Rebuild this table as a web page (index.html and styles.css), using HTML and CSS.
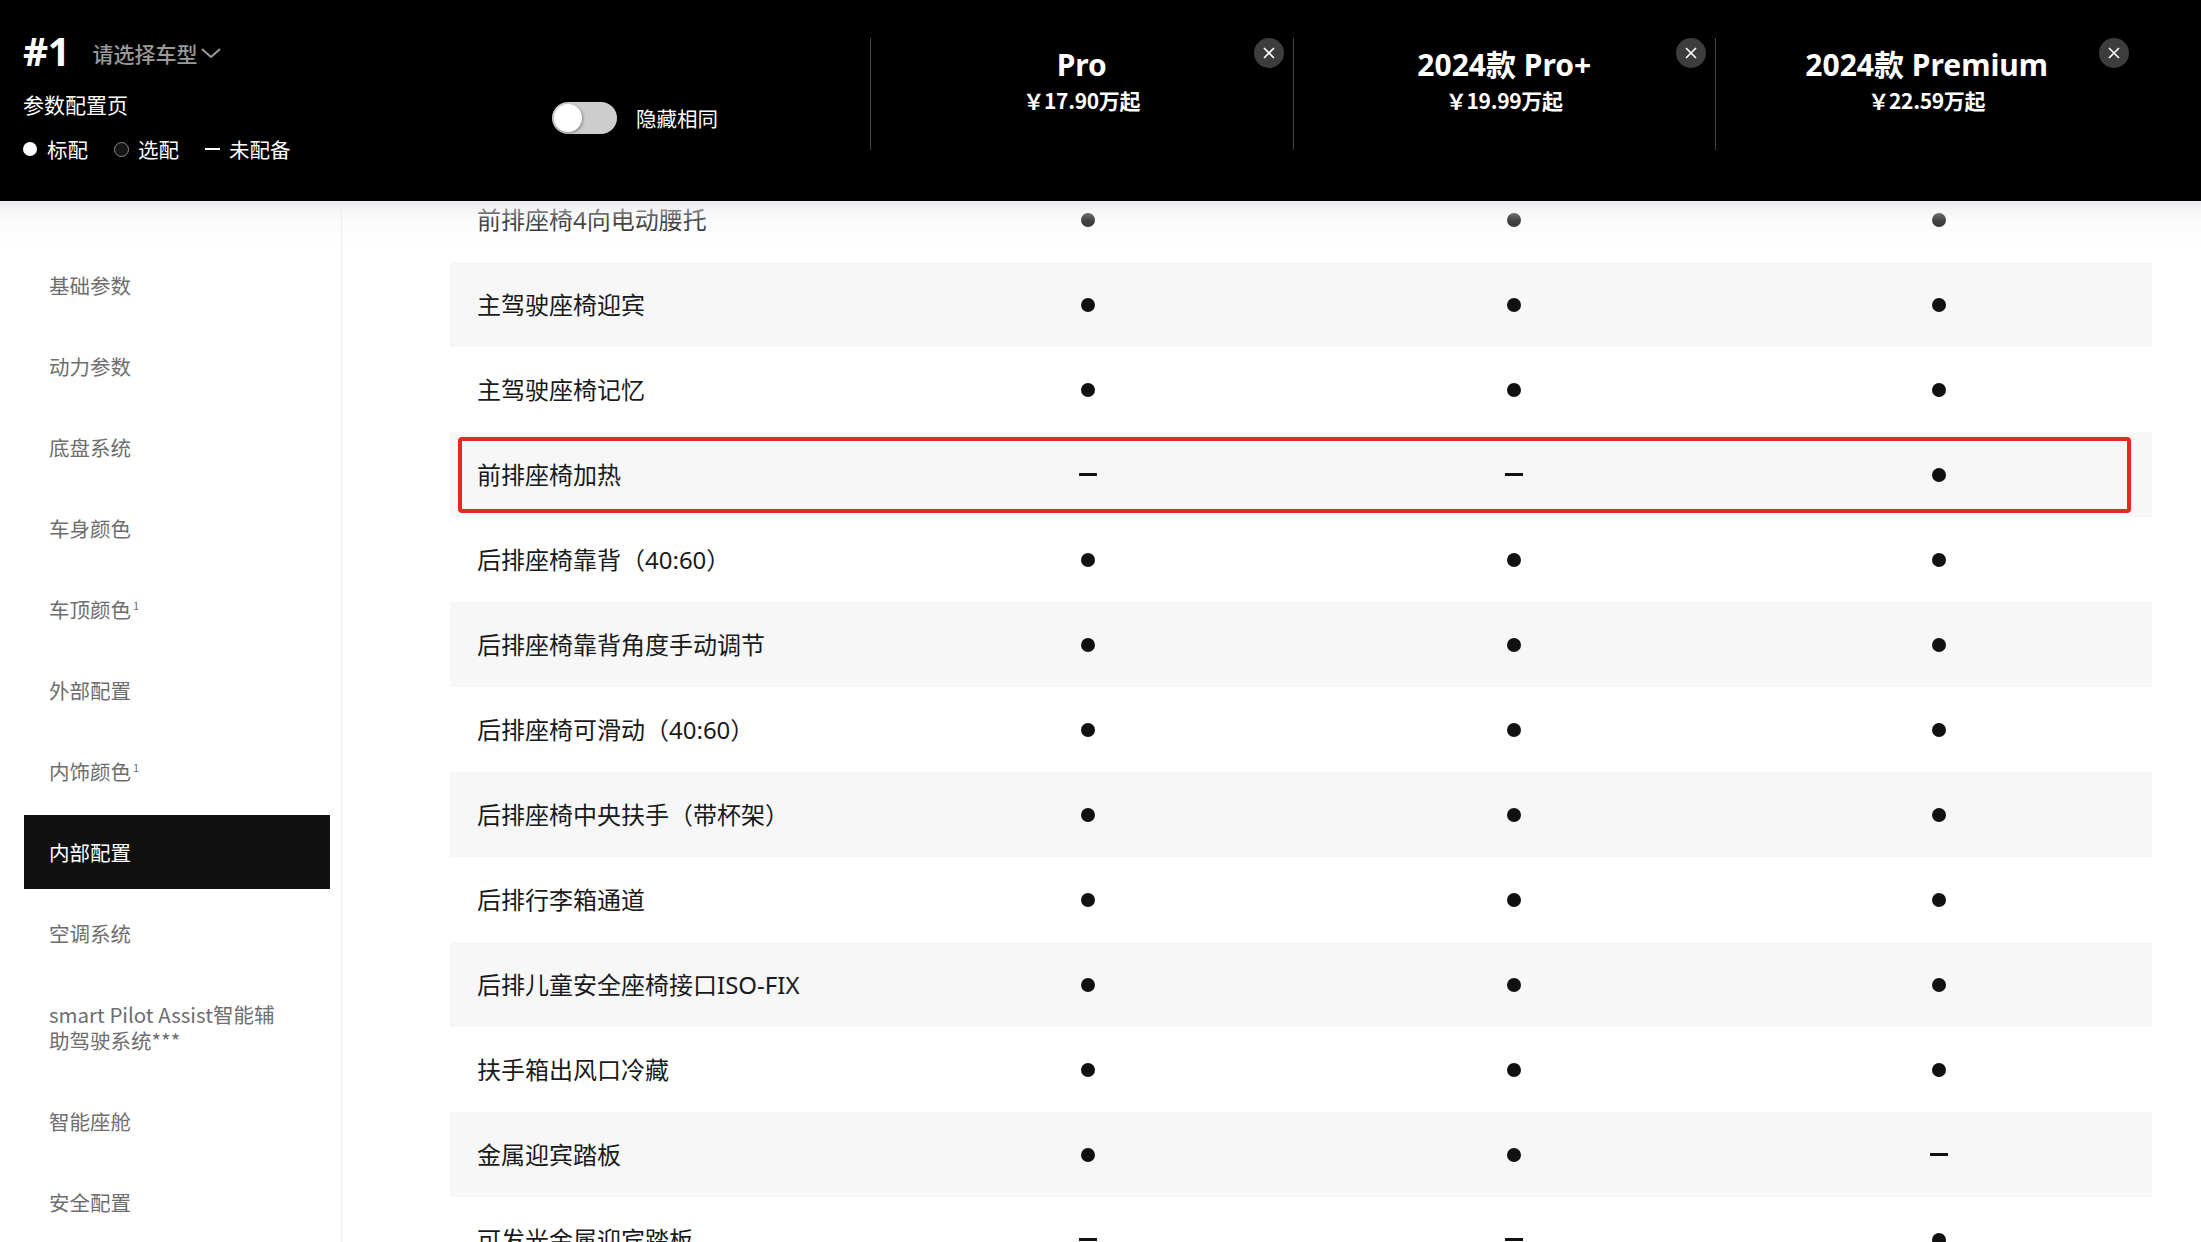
FILE: index.html
```html
<!DOCTYPE html>
<html lang="zh-CN">
<head>
<meta charset="utf-8">
<title>参数配置页</title>
<link rel="stylesheet" href="styles.css">
</head>
<body>
<div class="page">
  <header class="top">
    <div class="brand">
      <div class="brand-row">
        <span class="num">#1</span>
        <span class="select">请选择车型<svg class="chev" viewBox="0 0 20 10" width="20" height="10"><polyline points="1,1 10,9 19,1" fill="none" stroke="#9a9a9a" stroke-width="2"/></svg></span>
      </div>
      <div class="page-title">参数配置页</div>
      <div class="legend">
        <span class="lg-dot"></span><span class="lg-text">标配</span>
        <span class="lg-ring"></span><span class="lg-text">选配</span>
        <span class="lg-dash"></span><span class="lg-text">未配备</span>
      </div>
    </div>
    <div class="hide-same">
      <span class="switch"><span class="knob"></span></span>
      <span class="hide-label">隐藏相同</span>
    </div>
    <div class="models">
      <div class="model">
        <div class="model-name">Pro</div>
        <div class="model-price">￥17.90万起</div>
        <span class="close"><svg viewBox="0 0 12 12" width="12" height="12"><path d="M1 1 L11 11 M11 1 L1 11" stroke="#fff" stroke-width="1.6" fill="none"/></svg></span>
      </div>
      <div class="model">
        <div class="model-name">2024款 Pro+</div>
        <div class="model-price">￥19.99万起</div>
        <span class="close"><svg viewBox="0 0 12 12" width="12" height="12"><path d="M1 1 L11 11 M11 1 L1 11" stroke="#fff" stroke-width="1.6" fill="none"/></svg></span>
      </div>
      <div class="model">
        <div class="model-name">2024款 Premium</div>
        <div class="model-price">￥22.59万起</div>
        <span class="close"><svg viewBox="0 0 12 12" width="12" height="12"><path d="M1 1 L11 11 M11 1 L1 11" stroke="#fff" stroke-width="1.6" fill="none"/></svg></span>
      </div>
    </div>
  </header>
  <div class="body">
    <nav class="side">
      <div class="nav-item">基础参数</div>
      <div class="nav-item">动力参数</div>
      <div class="nav-item">底盘系统</div>
      <div class="nav-item">车身颜色</div>
      <div class="nav-item">车顶颜色<sup>1</sup></div>
      <div class="nav-item">外部配置</div>
      <div class="nav-item">内饰颜色<sup>1</sup></div>
      <div class="nav-item active">内部配置</div>
      <div class="nav-item">空调系统</div>
      <div class="nav-item">smart Pilot Assist智能辅助驾驶系统***</div>
      <div class="nav-item">智能座舱</div>
      <div class="nav-item">安全配置</div>
    </nav>
    <main class="main">
      <div class="rows">
        <div class="row"><div class="label">前排座椅4向电动腰托</div><div class="cell"><span class="dot"></span></div><div class="cell"><span class="dot"></span></div><div class="cell"><span class="dot"></span></div></div>
        <div class="row alt"><div class="label">主驾驶座椅迎宾</div><div class="cell"><span class="dot"></span></div><div class="cell"><span class="dot"></span></div><div class="cell"><span class="dot"></span></div></div>
        <div class="row"><div class="label">主驾驶座椅记忆</div><div class="cell"><span class="dot"></span></div><div class="cell"><span class="dot"></span></div><div class="cell"><span class="dot"></span></div></div>
        <div class="row alt highlight"><div class="label">前排座椅加热</div><div class="cell"><span class="dash"></span></div><div class="cell"><span class="dash"></span></div><div class="cell"><span class="dot"></span></div></div>
        <div class="row"><div class="label">后排座椅靠背（40:60）</div><div class="cell"><span class="dot"></span></div><div class="cell"><span class="dot"></span></div><div class="cell"><span class="dot"></span></div></div>
        <div class="row alt"><div class="label">后排座椅靠背角度手动调节</div><div class="cell"><span class="dot"></span></div><div class="cell"><span class="dot"></span></div><div class="cell"><span class="dot"></span></div></div>
        <div class="row"><div class="label">后排座椅可滑动（40:60）</div><div class="cell"><span class="dot"></span></div><div class="cell"><span class="dot"></span></div><div class="cell"><span class="dot"></span></div></div>
        <div class="row alt"><div class="label">后排座椅中央扶手（带杯架）</div><div class="cell"><span class="dot"></span></div><div class="cell"><span class="dot"></span></div><div class="cell"><span class="dot"></span></div></div>
        <div class="row"><div class="label">后排行李箱通道</div><div class="cell"><span class="dot"></span></div><div class="cell"><span class="dot"></span></div><div class="cell"><span class="dot"></span></div></div>
        <div class="row alt"><div class="label">后排儿童安全座椅接口ISO-FIX</div><div class="cell"><span class="dot"></span></div><div class="cell"><span class="dot"></span></div><div class="cell"><span class="dot"></span></div></div>
        <div class="row"><div class="label">扶手箱出风口冷藏</div><div class="cell"><span class="dot"></span></div><div class="cell"><span class="dot"></span></div><div class="cell"><span class="dot"></span></div></div>
        <div class="row alt"><div class="label">金属迎宾踏板</div><div class="cell"><span class="dot"></span></div><div class="cell"><span class="dot"></span></div><div class="cell"><span class="dash"></span></div></div>
        <div class="row"><div class="label">可发光金属迎宾踏板</div><div class="cell"><span class="dash"></span></div><div class="cell"><span class="dash"></span></div><div class="cell"><span class="dot"></span></div></div>
      </div>
    </main>
  </div>
</div>
</body>
</html>
```

FILE: styles.css
```css
* { box-sizing: border-box; }
html, body { margin: 0; padding: 0; }
body {
  font-family: "Noto Sans", "Noto Sans CJK SC", sans-serif;
  background: #fff;
  color: #1a1a1a;
  overflow: hidden;
}
.page { width: 2201px; height: 1242px; overflow: hidden; }

/* header */
.top {
  position: relative;
  z-index: 2;
  display: flex;
  height: 201px;
  background: #000;
  color: #fff;
  padding-left: 23px;
}
.top::after {
  content: "";
  position: absolute;
  left: 0; right: 0; top: 100%;
  height: 46px;
  background: linear-gradient(to bottom,
    rgba(232,232,237,0.95) 0px,
    rgba(236,236,240,0.5) 9px,
    rgba(240,240,244,0.22) 20px,
    rgba(255,255,255,0) 46px);
  pointer-events: none;
}
.brand { width: 529px; padding-top: 31px; }
.brand-row { display: flex; align-items: center; height: 40px; }
.num { font-size: 39px; font-weight: 700; line-height: 40px; letter-spacing: -0.5px; }
.select {
  margin-left: 23px;
  display: flex; align-items: center;
  font-family: "Noto Sans CJK SC", sans-serif;
  font-size: 21px; font-weight: 500; color: #9a9a9a; line-height: 30px;
  padding-top: 3px;
}
.chev { margin-left: 3px; }
.page-title {
  margin-top: 18px;
  font-family: "Noto Sans CJK SC", sans-serif;
  font-size: 21px; line-height: 30px;
}
.legend {
  margin-top: 15px;
  display: flex; align-items: center;
  height: 30px;
  font-family: "Noto Sans CJK SC", sans-serif;
  font-size: 20.5px;
}
.lg-dot { width: 14px; height: 14px; border-radius: 50%; background: #fff; margin-right: 10px; }
.lg-ring { width: 15px; height: 15px; border-radius: 50%; border: 1.5px solid #8a8a8a; background: #151515; margin-right: 9px; }
.lg-dash { width: 15px; height: 2px; background: #fff; margin-right: 9px; }
.lg-text { margin-right: 26px; }

.hide-same {
  width: 318px;
  padding-top: 102px;
  display: flex; align-items: flex-start;
}
.switch {
  position: relative;
  width: 65px; height: 32px;
  border-radius: 16px;
  background: #cdcdcd;
}
.knob {
  position: absolute; left: 2px; top: 2px;
  width: 28px; height: 28px; border-radius: 50%;
  background: #fff;
  box-shadow: 1px 1px 3px rgba(0,0,0,0.35);
}
.hide-label {
  margin-left: 19px;
  font-family: "Noto Sans CJK SC", sans-serif;
  font-size: 20.5px; line-height: 32px;
}

.models { display: flex; padding-top: 38px; }
.model {
  position: relative;
  width: 422.5px; height: 112px;
  border-left: 1px solid #444;
  text-align: center;
  padding-top: 8px;
}
.model-name { font-size: 30px; font-weight: 700; line-height: 38px; }
.model-price {
  margin-top: 1px;
  font-family: "Noto Sans CJK SC", sans-serif;
  font-size: 21px; font-weight: 700; line-height: 30px;
  letter-spacing: -0.3px;
}
.close {
  position: absolute; top: 0; right: 9px;
  width: 30px; height: 30px; border-radius: 50%;
  background: #3d3d3d;
  display: flex; align-items: center; justify-content: center;
}

/* body */
.body { display: flex; height: 1041px; overflow: hidden; }
.side {
  width: 342px; flex-shrink: 0;
  border-right: 1px solid #eeeeee;
  padding: 47px 11px 0 24px;
  font-family: "Noto Sans CJK SC", sans-serif;
}
.nav-item {
  padding: 24px 40px 24px 25px;
  margin-bottom: 7px;
  font-size: 20.5px; line-height: 26px;
  color: #6e6e6e;
}
.nav-item sup { font-size: 11px; vertical-align: 8px; line-height: 0; margin-left: 2px; }
.nav-item.active { background: #111; color: #fff; }

.main { flex: 1; overflow: hidden; padding: 0 49px 0 108px; }
.rows { margin-top: -24px; }
.row {
  position: relative;
  display: grid;
  grid-template-columns: repeat(4, 1fr);
  align-items: center;
  height: 85px;
}
.row.alt { background: #f7f7f8; }
.row.highlight::after {
  content: "";
  position: absolute;
  left: 8px; right: 21px; top: 5px; bottom: 4px;
  border: 4px solid #e8281f;
  border-radius: 4px;
}
.label {
  padding-left: 27px;
  font-family: "Noto Sans", "Noto Sans CJK SC", sans-serif;
  font-size: 24px; line-height: 30px;
  color: #1a1a1a;
  white-space: nowrap;
}
.cell { display: flex; justify-content: center; align-items: center; }
.dot { width: 14px; height: 14px; border-radius: 50%; background: #111; }
.dash { width: 18px; height: 2.5px; background: #111; }
```
